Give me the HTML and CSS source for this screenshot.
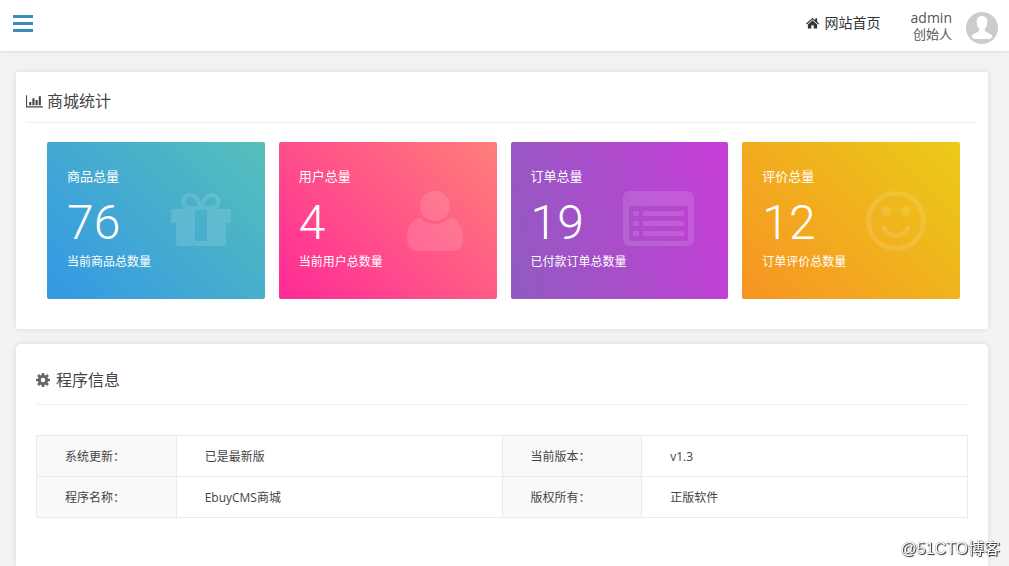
FILE: index.html
```html
<!DOCTYPE html>
<html lang="zh-CN">
<head>
<meta charset="utf-8">
<meta name="viewport" content="width=device-width, initial-scale=1">
<title>商城统计</title>
<link rel="stylesheet" href="styles.css">
</head>
<body>
<header class="topbar">
  <button class="menu-toggle" type="button" aria-label="菜单"><span></span><span></span><span></span></button>
  <a class="home-link" href="#">
    <svg class="home-icon" viewBox="0 0 14 12" aria-hidden="true"><path fill="currentColor" d="M7 .5 10 3V1h2v3.700L14 6.500l-.8 1L7 2.300.8 7.500 0 6.500ZM7 3.400l5 4.100V12H8.300V8.500H5.700V12H2V7.500Z"/></svg>
    网站首页
  </a>
  <div class="account">
    <span class="account-name">admin</span>
    <span class="account-role">创始人</span>
  </div>
  <svg class="avatar" viewBox="0 0 32 32" aria-hidden="true">
    <defs><clipPath id="avatar-clip"><circle cx="16" cy="16" r="15"/></clipPath></defs>
    <circle cx="16" cy="16" r="16" fill="#ccc"/>
    <path clip-path="url(#avatar-clip)" fill="#fff" d="M16 4c3.600 0 5.500 2.300 5.300 6-.1 3.200-1.100 5.300-2.500 6.600v2.200c.4 1.600 6.800 2.300 7.700 6L24 27H8l-2.500-2.200c.9-3.700 7.300-4.400 7.700-6v-2.200c-1.400-1.300-2.400-3.400-2.500-6.600C10.500 6.300 12.400 4 16 4Z"/>
  </svg>
</header>

<main class="content">
  <section class="panel stats">
    <h2 class="panel-title">
      <svg class="chart-icon" viewBox="0 0 16 13" aria-hidden="true"><path fill="currentColor" d="M0 1h1v10.500h15v1H0ZM3 7.500h2v3H3ZM6 4h2v6.500H6ZM9 5.500h2v5H9ZM12 2h2v8.500h-2Z"/></svg>
      商城统计
    </h2>
    <div class="cards">
      <article class="card card-goods">
        <div class="card-text"><h3>商品总量</h3><strong>76</strong><p>当前商品总数量</p></div>
        <svg class="card-icon" width="60" height="60" viewBox="0 0 60 60" aria-hidden="true"><path fill="currentColor" fill-rule="evenodd" d="M1 18h14c-7-3-6-16 4-16 6 0 9 5 11 9 2-4 5-9 11-9 10 0 11 13 4 16h14q1 0 1 1v13h-5v20q0 3-3 3H8q-3 0-3-3V32H0V19q0-1 1-1ZM19 6c-6 0-6 9 0 9h8c-2-5-4-9-8-9Zm22 0c-4 0-6 4-8 9h8c6 0 6-9 0-9ZM24 19v31h12V19Z"/></svg>
      </article>
      <article class="card card-users">
        <div class="card-text"><h3>用户总量</h3><strong>4</strong><p>当前用户总数量</p></div>
        <svg class="card-icon" width="56" height="60" viewBox="0 0 56 60" aria-hidden="true"><circle cx="28" cy="15" r="15" fill="currentColor"/><path fill="currentColor" d="M13 27c9 8 21 8 30 0 9 1 13 10 13 21 0 7-4 12-10 12H10C4 60 0 55 0 48c0-11 4-20 13-21Z"/></svg>
      </article>
      <article class="card card-orders">
        <div class="card-text"><h3>订单总量</h3><strong>19</strong><p>已付款订单总数量</p></div>
        <svg class="card-icon" width="71" height="60" viewBox="0 0 71 60" aria-hidden="true"><path fill="currentColor" fill-rule="evenodd" d="M7 0h57q7 0 7 7v41q0 7-7 7H7q-7 0-7-7V7q0-7 7-7ZM7 15q-1 0-1 1v32q0 2 2 2h55q2 0 2-2V16q0-1-1-1ZM11 20h4q1 0 1 1v3q0 1-1 1h-4q-1 0-1-1v-3q0-1 1-1Zm10 0h39q1 0 1 1v3q0 1-1 1H21q-1 0-1-1v-3q0-1 1-1ZM11 30h4q1 0 1 1v3q0 1-1 1h-4q-1 0-1-1v-3q0-1 1-1Zm10 0h39q1 0 1 1v3q0 1-1 1H21q-1 0-1-1v-3q0-1 1-1ZM11 40h4q1 0 1 1v3q0 1-1 1h-4q-1 0-1-1v-3q0-1 1-1Zm10 0h39q1 0 1 1v3q0 1-1 1H21q-1 0-1-1v-3q0-1 1-1Z"/></svg>
      </article>
      <article class="card card-reviews">
        <div class="card-text"><h3>评价总量</h3><strong>12</strong><p>订单评价总数量</p></div>
        <svg class="card-icon" width="60" height="60" viewBox="0 0 60 60" aria-hidden="true"><circle cx="30" cy="30" r="27.500" fill="none" stroke="currentColor" stroke-width="5"/><circle cx="20" cy="20" r="5" fill="currentColor"/><circle cx="40" cy="20" r="5" fill="currentColor"/><path d="M18 37c4 10 20 10 24 0" fill="none" stroke="currentColor" stroke-width="5" stroke-linecap="round"/></svg>
      </article>
    </div>
  </section>

  <section class="panel info">
    <h2 class="panel-title">
      <svg class="gear-icon" viewBox="0 0 14 14" aria-hidden="true"><circle cx="7" cy="7" r="3.700" fill="none" stroke="currentColor" stroke-width="3"/><path stroke="currentColor" stroke-width="2.600" d="M7 0v3M7 11v3M0 7h3M11 7h3M2 2l2.200 2.200M9.800 9.800 12 12M12 2 9.800 4.200M4.200 9.800 2 12"/></svg>
      程序信息
    </h2>
    <table class="info-table">
      <tr><th scope="row">系统更新：</th><td>已是最新版</td><th scope="row">当前版本：</th><td>v1.3</td></tr>
      <tr><th scope="row">程序名称：</th><td>EbuyCMS商城</td><th scope="row">版权所有：</th><td>正版软件</td></tr>
    </table>
  </section>
</main>
<div class="watermark">@51CTO博客</div>
</body>
</html>
```
FILE: styles.css
```css
* { box-sizing: border-box; }

body {
  margin: 0;
  height: 100vh;
  overflow: hidden;
  display: flex;
  flex-direction: column;
  background: #f3f3f3;
  color: #444;
  font: 12px/20px "Open Sans", "Noto Sans CJK SC", sans-serif;
}

h2, h3, p { margin: 0; font-weight: 400; }

.topbar {
  display: flex;
  align-items: center;
  height: 51px;
  flex: none;
  padding: 0 11px 0 13px;
  background: #fff;
  box-shadow: 0 1px 3px rgba(0, 0, 0, .1);
}

.menu-toggle {
  display: grid;
  gap: 4px;
  width: 20px;
  margin: 0 auto 4px 0;
  padding: 0;
  border: 0;
  background: none;
}
.menu-toggle span { height: 3px; background: #3c8dbc; }

.home-link {
  display: flex;
  align-items: center;
  gap: 6px;
  margin: 0 30px 6px 0;
  color: #333;
  font-size: 14px;
  text-decoration: none;
}
.home-icon { width: 13px; height: 12px; }

.account {
  display: grid;
  justify-items: end;
  margin-right: 14px;
  color: #555;
  font-size: 13px;
  line-height: 16px;
}
.account-name { font-size: 14px; }
.avatar { width: 32px; height: 32px; margin-top: 4px; }

.content {
  flex: 1;
  display: flex;
  flex-direction: column;
  gap: 15px;
  padding: 21px 21px 0 16px;
}

.panel {
  background: #fff;
  box-shadow: 0 0 6px rgba(0, 0, 0, .1);
}
.panel-title {
  display: flex;
  align-items: center;
  border-bottom: 1px solid #eee;
  font-size: 16px;
  line-height: 24px;
}

.stats { padding: 10px 12px 30px 10px; border-radius: 2px; }
.stats .panel-title { gap: 4px; padding: 7px 0 9px; }
.chart-icon { width: 17px; height: 14px; }

.cards {
  display: grid;
  grid-template-columns: repeat(4, 1fr);
  gap: 14px;
  padding: 19px 16px 0 21px;
}
.card {
  display: flex;
  justify-content: space-between;
  align-items: center;
  height: 157px;
  padding: 0 34px 0 20px;
  border-radius: 2px;
  color: #fff;
}
.card-text { padding-bottom: 3px; white-space: nowrap; }
.card h3 { font-size: 13px; }
.card strong {
  display: block;
  padding: 10px 0 2px;
  font: 300 48px/54px Roboto, "Open Sans", sans-serif;
}
.card-icon { flex: none; margin-left: -40px; opacity: .12; }
.card-goods { background: linear-gradient(45deg, #3498e5, #56bfba); }
.card-users { background: linear-gradient(45deg, #ff2a97, #ff7f79); }
.card-orders { background: linear-gradient(75deg, #905bc0, #c73dd7); }
.card-reviews { background: linear-gradient(45deg, #f79424, #ebcb18); }

.info {
  flex: 1;
  padding: 16px 20px 0;
  border-radius: 5px 5px 0 0;
}
.info .panel-title { gap: 6px; padding: 8px 0 12px; }
.gear-icon { width: 14px; height: 14px; color: #666; }

.info-table {
  width: 100%;
  margin-top: 30px;
  border-collapse: collapse;
  table-layout: fixed;
}
.info-table th, .info-table td {
  height: 41px;
  padding: 2px 28px 0;
  border: 1px solid #ebebeb;
  font-weight: 400;
  text-align: left;
}
.info-table th { width: 15%; background: #f9f9f9; }

.watermark {
  position: fixed;
  right: 9px;
  bottom: 7px;
  color: #fff;
  font: 16px/20px "Liberation Sans", "Noto Sans CJK SC", sans-serif;
  text-shadow: 1px 1px 1px #222, 0 0 1px #444;
}
```
